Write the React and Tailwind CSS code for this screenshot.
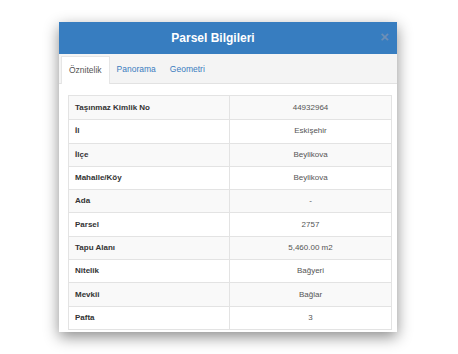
import React from 'react';

const rows = [
  ['Taşınmaz Kimlik No', '44932964'],
  ['İl', 'Eskişehir'],
  ['İlçe', 'Beylikova'],
  ['Mahalle/Köy', 'Beylikova'],
  ['Ada', '-'],
  ['Parsel', '2757'],
  ['Tapu Alanı', '5,460.00 m2'],
  ['Nitelik', 'Bağyeri'],
  ['Mevkii', 'Bağlar'],
  ['Pafta', '3'],
];

const App = () => {
  return (
    <div className="w-[458px] h-[354px] bg-white pt-[22px] pl-[59px] font-['Liberation_Sans',Arial,sans-serif]">
      <div className="w-[338px] h-[310px] bg-white flex flex-col shadow-[0_5px_14px_rgba(0,0,0,0.45)]">
        {/* header */}
        <div className="h-[32px] bg-[#377dc0] flex items-center relative">
          <div className="flex-1 text-center pr-[30px] text-white font-bold text-[12px]">Parsel Bilgileri</div>
          <span className="absolute right-[8px] top-[7px] text-[#6d8fb6] font-bold text-[15px] leading-none">×</span>
        </div>

        {/* tabs */}
        <div className="h-[30px] bg-[#f4f4f4] border-b border-[#e2e2e2] flex items-end pl-[2px]">
          <div className="h-[28px] -mb-px px-[7px] bg-white border-x border-t border-[#e6e6e6] flex items-center text-[8.5px] text-[#555]">
            Öznitelik
          </div>
          <div className="h-[28px] px-[7px] flex items-center text-[8.5px] text-[#3a7cbf]">Panorama</div>
          <div className="h-[28px] px-[7px] flex items-center text-[8.5px] text-[#3a7cbf]">Geometri</div>
        </div>

        {/* table */}
        <div className="pt-[11px] pl-[9px] pr-[5px]">
          <div className="border border-[#e3e3e3]">
            {rows.map(([label, value], i) => (
              <div
                key={label}
                className={`h-[23.3px] flex text-[8px] ${i > 0 ? 'border-t border-[#e3e3e3]' : ''} ${i % 2 === 0 ? 'bg-[#f9f9f9]' : 'bg-white'}`}
              >
                <div className="w-1/2 flex items-center pl-[6px] font-bold text-[#333] border-r border-[#e3e3e3]">{label}</div>
                <div className="w-1/2 flex items-center justify-center text-[#555]">{value}</div>
              </div>
            ))}
          </div>
        </div>
      </div>
    </div>
  );
};

export default App;
